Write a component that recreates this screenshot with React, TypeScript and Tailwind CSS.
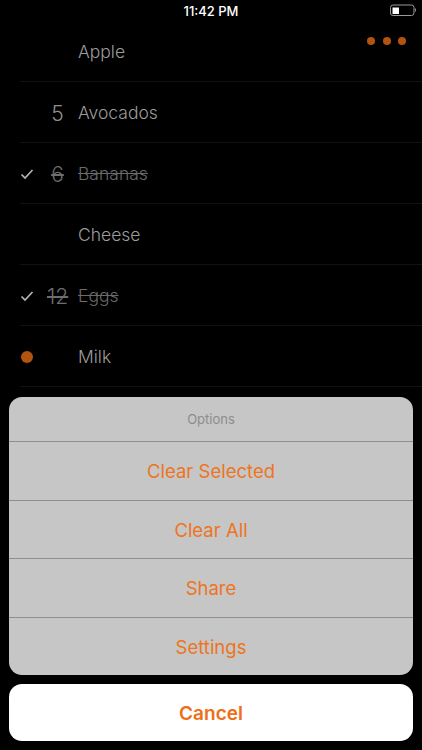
const FONT = "font-['Inter','Liberation_Sans',sans-serif]";

type Item = {
  name: string;
  qty?: number;
  mark?: "check" | "dot";
};

const ITEMS: Item[] = [
  { name: "Apple" },
  { name: "Avocados", qty: 5 },
  { name: "Bananas", qty: 6, mark: "check" },
  { name: "Cheese" },
  { name: "Eggs", qty: 12, mark: "check" },
  { name: "Milk", mark: "dot" },
];

const ACTIONS = ["Clear Selected", "Clear All", "Share", "Settings"];

function StatusBar() {
  return (
    <div className="relative flex h-[21px] items-center justify-center pt-[1px]">
      <span className="text-[13px] font-medium leading-none text-white">11:42 PM</span>
      <svg className="absolute right-[5px] top-[4px]" width="27" height="12" viewBox="0 0 27 12">
        <rect x="0.5" y="1" width="23.5" height="10.5" rx="2.5" fill="none" stroke="#9a9a9a" strokeWidth="1" />
        <rect x="2.5" y="3.5" width="6.5" height="6.5" fill="#ffffff" />
        <rect x="25" y="4.5" width="1" height="3" fill="#8a8a8a" />
      </svg>
    </div>
  );
}

function Row({ item }: { item: Item }) {
  const done = item.mark === "check";
  return (
    <div className="ml-5 flex h-[61px] items-center border-b border-[#111111] pt-[2px]">
      <div className="flex w-[14px] items-center justify-center">
        {done ? (
          <svg width="14" height="12" viewBox="0 0 14 12">
            <path d="M1.5 6.5 L5 10 L12.5 2" fill="none" stroke="#b4b4b4" strokeWidth="1.7" />
          </svg>
        ) : null}
        {item.mark === "dot" ? <div className="h-3 w-3 shrink-0 rounded-full bg-[#b0540f]" /> : null}
      </div>
      <div
        className={`ml-[13px] w-[21px] text-center text-[21px] font-light leading-none ${
          done ? "text-[#6e6e6e] line-through" : "text-[#8f8f8f]"
        }`}
      >
        {item.qty}
      </div>
      <div
        className={`ml-[10px] text-[17.5px] font-light leading-none ${
          done ? "text-[#6a6a6a] line-through" : "text-[#9c9c9c]"
        }`}
      >
        {item.name}
      </div>
    </div>
  );
}

export default function App() {
  return (
    <main className={`relative h-[750px] w-[422px] overflow-hidden bg-black ${FONT}`}>
      <StatusBar />
      <div>
        {ITEMS.map((item) => (
          <Row key={item.name} item={item} />
        ))}
      </div>

      <div className="absolute right-[16px] top-[37px] flex gap-[7.5px]">
        <div className="h-[8px] w-[8px] rounded-full bg-[#b0540f]" />
        <div className="h-[8px] w-[8px] rounded-full bg-[#b0540f]" />
        <div className="h-[8px] w-[8px] rounded-full bg-[#b0540f]" />
      </div>

      <div className="absolute bottom-[9px] left-[9px] right-[9px] flex flex-col gap-[9px]">
        <div className="overflow-hidden rounded-[13px] bg-[#c6c6c6]">
          <div className="flex h-[44px] items-center justify-center pt-[2px] text-[13px] text-[#8c8c8c]">Options</div>
          {ACTIONS.map((label) => (
            <div
              key={label}
              className="flex h-[58.5px] items-center justify-center border-t border-[#8e8e8e] pt-[3px] text-[18.5px] text-[#ee7420]"
            >
              {label}
            </div>
          ))}
        </div>
        <div className="flex h-[57px] items-center justify-center rounded-[13px] bg-white pt-[3px] text-[19px] font-semibold text-[#ee6f16]">
          Cancel
        </div>
      </div>
    </main>
  );
}
